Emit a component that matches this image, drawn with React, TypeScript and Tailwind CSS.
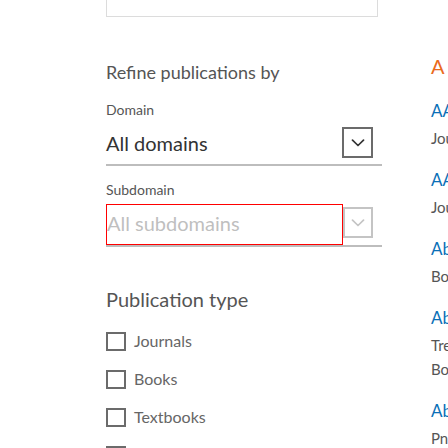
const TYPES = ["Journals", "Books", "Textbooks", "Reference works"];

const TITLES = [
  { title: "AAPS Journal", lines: ["Journal"] },
  { title: "AAPS PharmSciTech", lines: ["Journal"] },
  { title: "Abdominal Imaging", lines: ["Book"] },
  { title: "Abdominal Surgery", lines: ["Treatise", "Book"] },
  { title: "Abdominal Trauma", lines: ["Pneumology"] },
];

const Chevron = ({ light }: { light?: boolean }) => (
  <svg width="14" height="8" viewBox="0 0 14 8" fill="none">
    <path
      d="M1.5 1.2l5.5 5.3 5.5-5.3"
      stroke={light ? "#c4c4c4" : "#333333"}
      strokeWidth="1.7"
      strokeLinecap="round"
      strokeLinejoin="round"
    />
  </svg>
);

export default function App() {
  return (
    <div className="flex w-[448px] h-[448px] overflow-hidden bg-white font-['Lato',sans-serif]">
      {/* filters */}
      <div className="ml-[106px] w-[276px] shrink-0 flex flex-col">
        <div className="w-[272px] h-[17px] shrink-0 border-x border-b border-[#dcdcdc]" />
        <div className="h-[43px] shrink-0" />

        <h2 className="text-[18px] leading-[24px] text-[#555555]">Refine publications by</h2>

        <label className="mt-[16px] text-[14px] leading-[20px] text-[#555555]">Domain</label>
        <div className="mt-[7px] flex items-center border-b-2 border-[#bdbdbd] pb-[6px]">
          <span className="flex-1 text-[20px] leading-[24px] text-[#333333]">All domains</span>
          <span className="mr-[9px] w-[31px] h-[31px] border-2 border-[#6b6b6b] flex items-center justify-center">
            <Chevron />
          </span>
        </div>

        <label className="mt-[14px] text-[14px] leading-[20px] text-[#555555]">Subdomain</label>
        <div className="mt-[4px] flex items-start border-b-2 border-[#bdbdbd]">
          <span className="w-[237px] h-[41px] border border-[#ff0000] flex items-center pb-[3px] text-[20px] leading-[24px] text-[#bfbfbf]">
            All subdomains
          </span>
          <span className="mt-[3px] w-[30px] h-[31px] border-2 border-[#c4c4c4] flex items-center justify-center">
            <Chevron light />
          </span>
        </div>

        <h3 className="mt-[40px] text-[20px] leading-[24px] text-[#555555]">Publication type</h3>
        <ul className="mt-[20px] flex flex-col gap-[18px]">
          {TYPES.map((t) => (
            <li key={t} className="flex items-center gap-[8px] h-[20px] shrink-0">
              <span className="w-[20px] h-[19px] border-2 border-[#6b6b6b] shrink-0" />
              <span className="text-[16px] leading-[20px] text-[#666666]">{t}</span>
            </li>
          ))}
        </ul>
      </div>

      {/* results */}
      <div className="ml-[49px] shrink-0 w-[300px] flex flex-col">
        <h2 className="mt-[54px] text-[20px] leading-[24px] text-[#ea6a1c]">A</h2>
        <div className="mt-[21px] flex flex-col gap-[18px]">
          {TITLES.map((item) => (
            <div key={item.title} className="flex flex-col">
              <a className="text-[17px] leading-[24px] text-[#0a6fb7] whitespace-nowrap">{item.title}</a>
              <div className="mt-[3px] flex flex-col">
                {item.lines.map((l) => (
                  <span key={l} className="text-[15px] leading-[24px] text-[#555555] whitespace-nowrap">
                    {l}
                  </span>
                ))}
              </div>
            </div>
          ))}
        </div>
      </div>
    </div>
  );
}
